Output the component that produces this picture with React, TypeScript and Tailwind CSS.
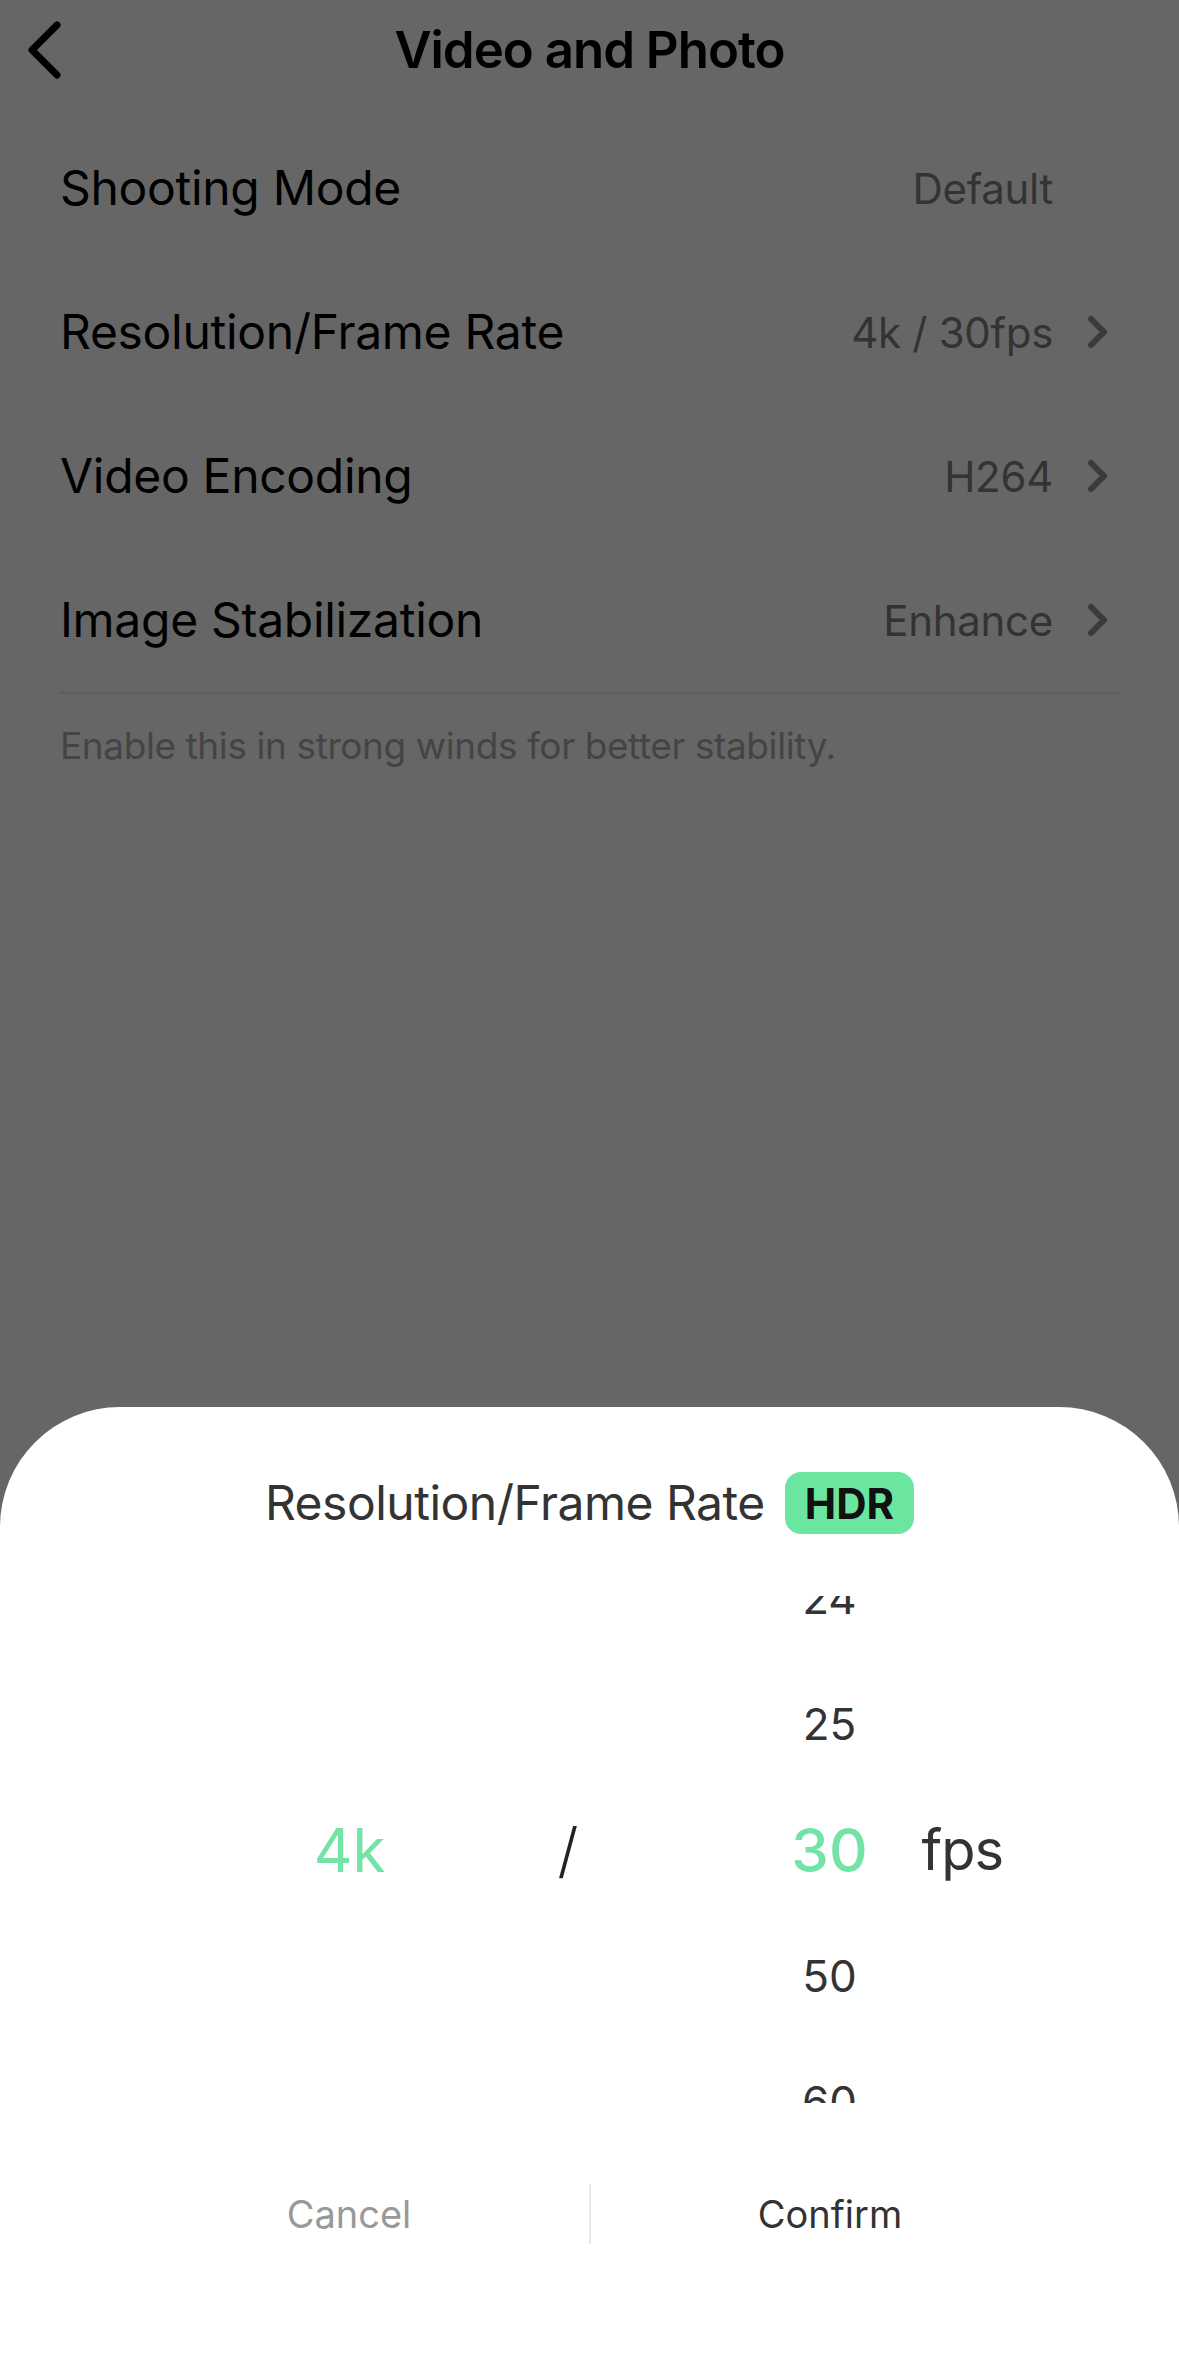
import React from "react";

const font = { fontFamily: "Inter, 'Noto Sans', sans-serif" };

function RowChevron() {
  return (
    <svg width="28" height="36" viewBox="0 0 28 36" className="shrink-0">
      <path d="M8 5 L21 18 L8 31" fill="none" stroke="#3a3a3a" strokeWidth="6" strokeLinecap="round" strokeLinejoin="round" />
    </svg>
  );
}

function Row({ label, value, chevron = true }: { label: string; value: string; chevron?: boolean }) {
  return (
    <div className="h-[144px] flex items-center justify-between">
      <span className="text-[48px] text-black tracking-[-0.3px]">{label}</span>
      <div className="flex items-center gap-[30px]">
        <span className="text-[42px] text-[#333333] tracking-[-0.3px]">{value}</span>
        <div className="w-[28px] flex items-center">{chevron ? <RowChevron /> : null}</div>
      </div>
    </div>
  );
}

export default function App() {
  const fpsItems = ["24", "25", "30", "50", "60"];
  return (
    <div style={font} className="relative w-[1179px] h-[2379px] overflow-hidden bg-[#666666]">
      {/* Header */}
      <div className="relative h-[100px] flex items-center justify-center">
        <svg className="absolute left-[22px] top-[18px]" width="46" height="64" viewBox="0 0 46 64">
          <path d="M35 7 L10 32 L35 57" fill="none" stroke="#000" strokeWidth="7" strokeLinecap="round" strokeLinejoin="round" />
        </svg>
        <span className="text-[51px] font-semibold text-black tracking-[-1px]">Video and Photo</span>
      </div>

      {/* Settings list */}
      <div className="mt-[16px] pl-[60px] pr-[68px]">
        <Row label="Shooting Mode" value="Default" chevron={false} />
        <Row label="Resolution/Frame Rate" value="4k / 30fps" />
        <Row label="Video Encoding" value="H264" />
        <Row label="Image Stabilization" value="Enhance" />
      </div>
      <div className="mx-[60px] h-[2px] bg-[#5e5e5e]" />
      <div className="mt-[24px] px-[60px] text-[37px] text-[#444444] tracking-[-0.4px]">
        Enable this in strong winds for better stability.
      </div>

      {/* Bottom sheet */}
      <div className="absolute left-0 right-0 bottom-0 h-[972px] bg-white rounded-t-[120px] flex flex-col">
        <div className="mt-[65px] h-[62px] flex items-center justify-center gap-[20px]">
          <span className="text-[48px] text-[#333333] tracking-[-0.5px]">Resolution/Frame Rate</span>
          <span className="h-[62px] px-[20px] rounded-[16px] bg-[#6ae6a0] flex items-center text-[42px] font-bold text-[#111111]">
            HDR
          </span>
        </div>

        {/* Picker */}
        <div className="mt-[62px] mx-auto w-[960px] h-[507px] overflow-hidden flex">
          <div className="relative w-[480px] h-full flex items-center justify-center">
            <span className="text-[60px] text-[#73e3a6]">4k</span>
            <span className="absolute right-[11px] top-1/2 -translate-y-1/2 text-[60px] font-light text-[#222222]">/</span>
          </div>
          <div className="relative w-[480px] h-full flex flex-col items-center justify-center">
            {fpsItems.map((v) => (
              <div key={v} className="h-[126px] shrink-0 flex items-center justify-center">
                {v === "30" ? (
                  <span className="text-[60px] font-medium text-[#73e3a6]">{v}</span>
                ) : (
                  <span className="text-[44px] text-[#333333]">{v}</span>
                )}
              </div>
            ))}
            <span className="absolute left-[332px] top-1/2 -translate-y-1/2 text-[56px] tracking-[-1px] text-[#333333]">fps</span>
          </div>
        </div>

        {/* Buttons */}
        <div className="mt-[81px] mx-auto w-[960px] h-[60px] flex items-center">
          <button className="flex-1 text-[38px] text-[#999999]">Cancel</button>
          <div className="w-[2px] h-[60px] bg-[#e8e8e8]" />
          <button className="flex-1 text-[38px] text-[#333333]">Confirm</button>
        </div>
      </div>
    </div>
  );
}
